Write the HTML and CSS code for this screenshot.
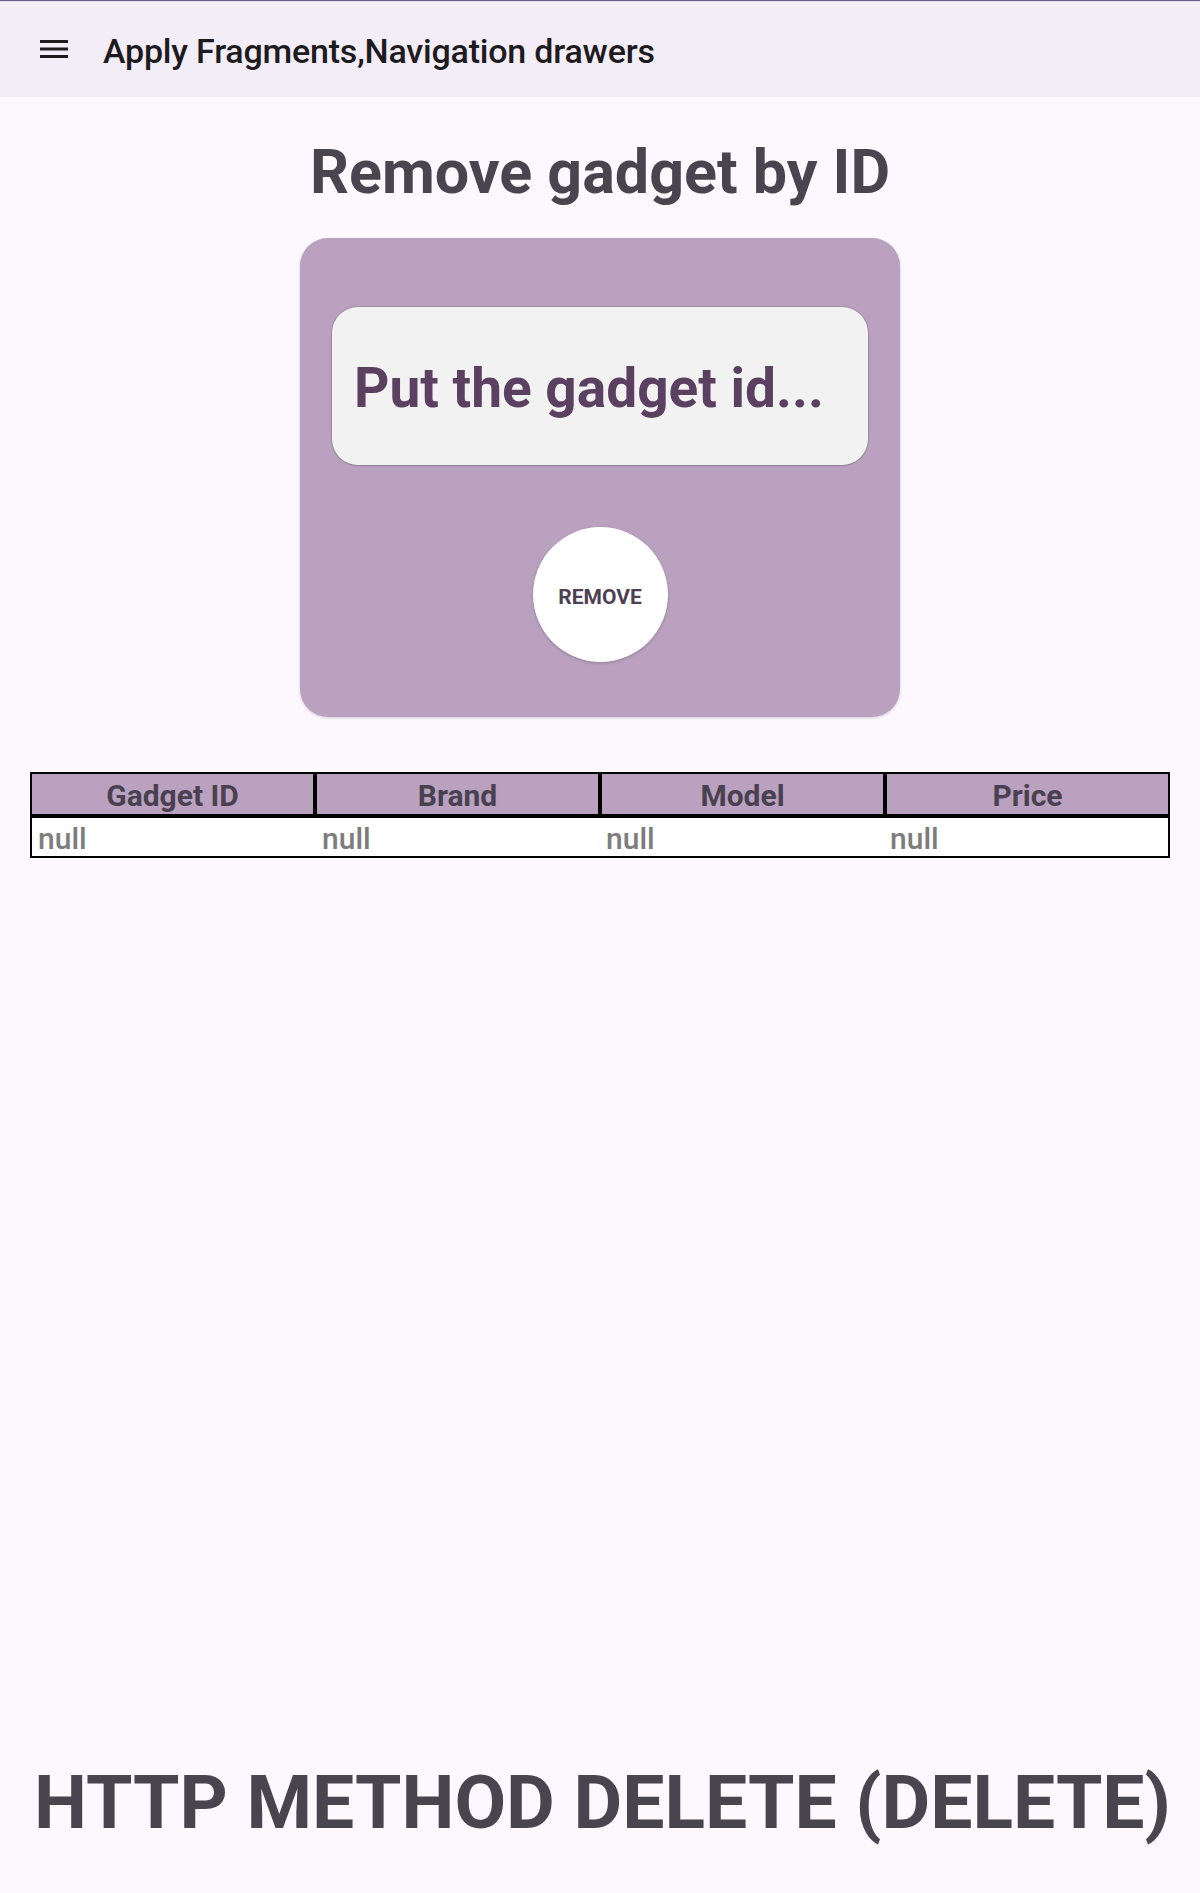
FILE: index.html
```html
<!DOCTYPE html>
<html lang="en">
<head>
<meta charset="utf-8">
<title>Remove gadget by ID</title>
<link rel="stylesheet" href="styles.css">
</head>
<body>
<div class="page">
  <header class="appbar">
    <svg class="menu-icon" width="28" height="20" viewBox="0 0 28 20" aria-hidden="true">
      <rect x="0" y="1" width="28" height="3" fill="#1d1b20"/>
      <rect x="0" y="8.5" width="28" height="3" fill="#1d1b20"/>
      <rect x="0" y="16" width="28" height="3" fill="#1d1b20"/>
    </svg>
    <div class="appbar-title">Apply Fragments,Navigation drawers</div>
  </header>

  <main class="content">
    <h1 class="heading">Remove gadget by ID</h1>

    <section class="card">
      <div class="input-box">
        <span class="placeholder">Put the gadget id...</span>
      </div>
      <div class="button-row">
        <button class="remove-btn">REMOVE</button>
      </div>
    </section>

    <div class="table">
      <div class="table-head">
        <div class="th"><span class="cell-text">Gadget ID</span></div>
        <div class="th"><span class="cell-text">Brand</span></div>
        <div class="th"><span class="cell-text">Model</span></div>
        <div class="th"><span class="cell-text">Price</span></div>
      </div>
      <div class="table-row">
        <div class="td">null</div>
        <div class="td">null</div>
        <div class="td">null</div>
        <div class="td">null</div>
      </div>
    </div>
  </main>

  <footer class="footer">HTTP METHOD DELETE (DELETE)</footer>
</div>
</body>
</html>
```

FILE: styles.css
```css
* {
  box-sizing: border-box;
}

html, body {
  margin: 0;
  padding: 0;
}

body {
  background: #fdf7fe;
  font-family: Roboto, "Noto Sans", "Liberation Sans", sans-serif;
}

.page {
  width: 1200px;
  min-height: 1893px;
  display: flex;
  flex-direction: column;
}

.appbar {
  height: 97px;
  background: #f3edf7;
  border-top: 1px solid #675e85;
  box-shadow: inset 0 1px 0 #e6def0;
  display: flex;
  align-items: center;
  padding-left: 40px;
}

.menu-icon {
  display: block;
  flex: none;
}

.appbar-title {
  margin-left: 35px;
  font-size: 34px;
  font-weight: 500;
  color: #1d1b20;
  letter-spacing: -0.2px;
  padding-top: 3px;
}

.content {
  flex: 1;
  display: flex;
  flex-direction: column;
  align-items: center;
}

.heading {
  margin: 39px 0 0;
  font-size: 61px;
  line-height: 72px;
  font-weight: 700;
  color: #49454f;
  text-align: center;
}

.card {
  margin-top: 30px;
  width: 600px;
  height: 479px;
  background: #b9a1bf;
  border-radius: 28px;
  box-shadow: 0 1px 3px rgba(0, 0, 0, 0.18);
  padding: 69px 32px 0;
  display: flex;
  flex-direction: column;
}

.input-box {
  height: 158px;
  background: #f2f2f2;
  border-radius: 26px;
  box-shadow: 0 0 0 1px rgba(120, 110, 125, 0.35), 0 1px 2px rgba(0, 0, 0, 0.15);
  display: flex;
  align-items: center;
  padding-left: 22px;
}

.placeholder {
  font-size: 55px;
  font-weight: 700;
  color: #5c4061;
  padding-top: 4px;
}

.button-row {
  display: flex;
  justify-content: center;
  margin-top: 62px;
}

.remove-btn {
  width: 135px;
  height: 135px;
  border-radius: 50%;
  border: none;
  background: #ffffff;
  box-shadow: 0 1px 3px rgba(0, 0, 0, 0.22);
  font-family: Roboto, "Noto Sans", "Liberation Sans", sans-serif;
  font-size: 21px;
  font-weight: 700;
  color: #4e3f52;
  padding: 4px 0 0;
}

.table {
  width: 1140px;
  margin-top: 55px;
  align-self: center;
}

.table-head {
  display: grid;
  grid-template-columns: repeat(4, 1fr);
}

.th {
  height: 44px;
  border: 2px solid #000;
  background: #b9a1bf;
  text-align: center;
  overflow: hidden;
}

.cell-text {
  display: block;
  font-size: 30px;
  line-height: 44px;
  font-weight: 700;
  color: #4a4150;
}

.table-row {
  display: grid;
  grid-template-columns: repeat(4, 1fr);
  border: 2px solid #000;
  background: #ffffff;
  height: 42px;
  overflow: hidden;
}

.td {
  font-size: 30px;
  line-height: 41px;
  font-weight: 500;
  color: #7d7d7d;
  padding-left: 6px;
  height: 38px;
  overflow: hidden;
}

.footer {
  padding: 0 0 45px 34px;
  font-size: 75px;
  line-height: 91px;
  font-weight: 700;
  color: #49454f;
}
```
